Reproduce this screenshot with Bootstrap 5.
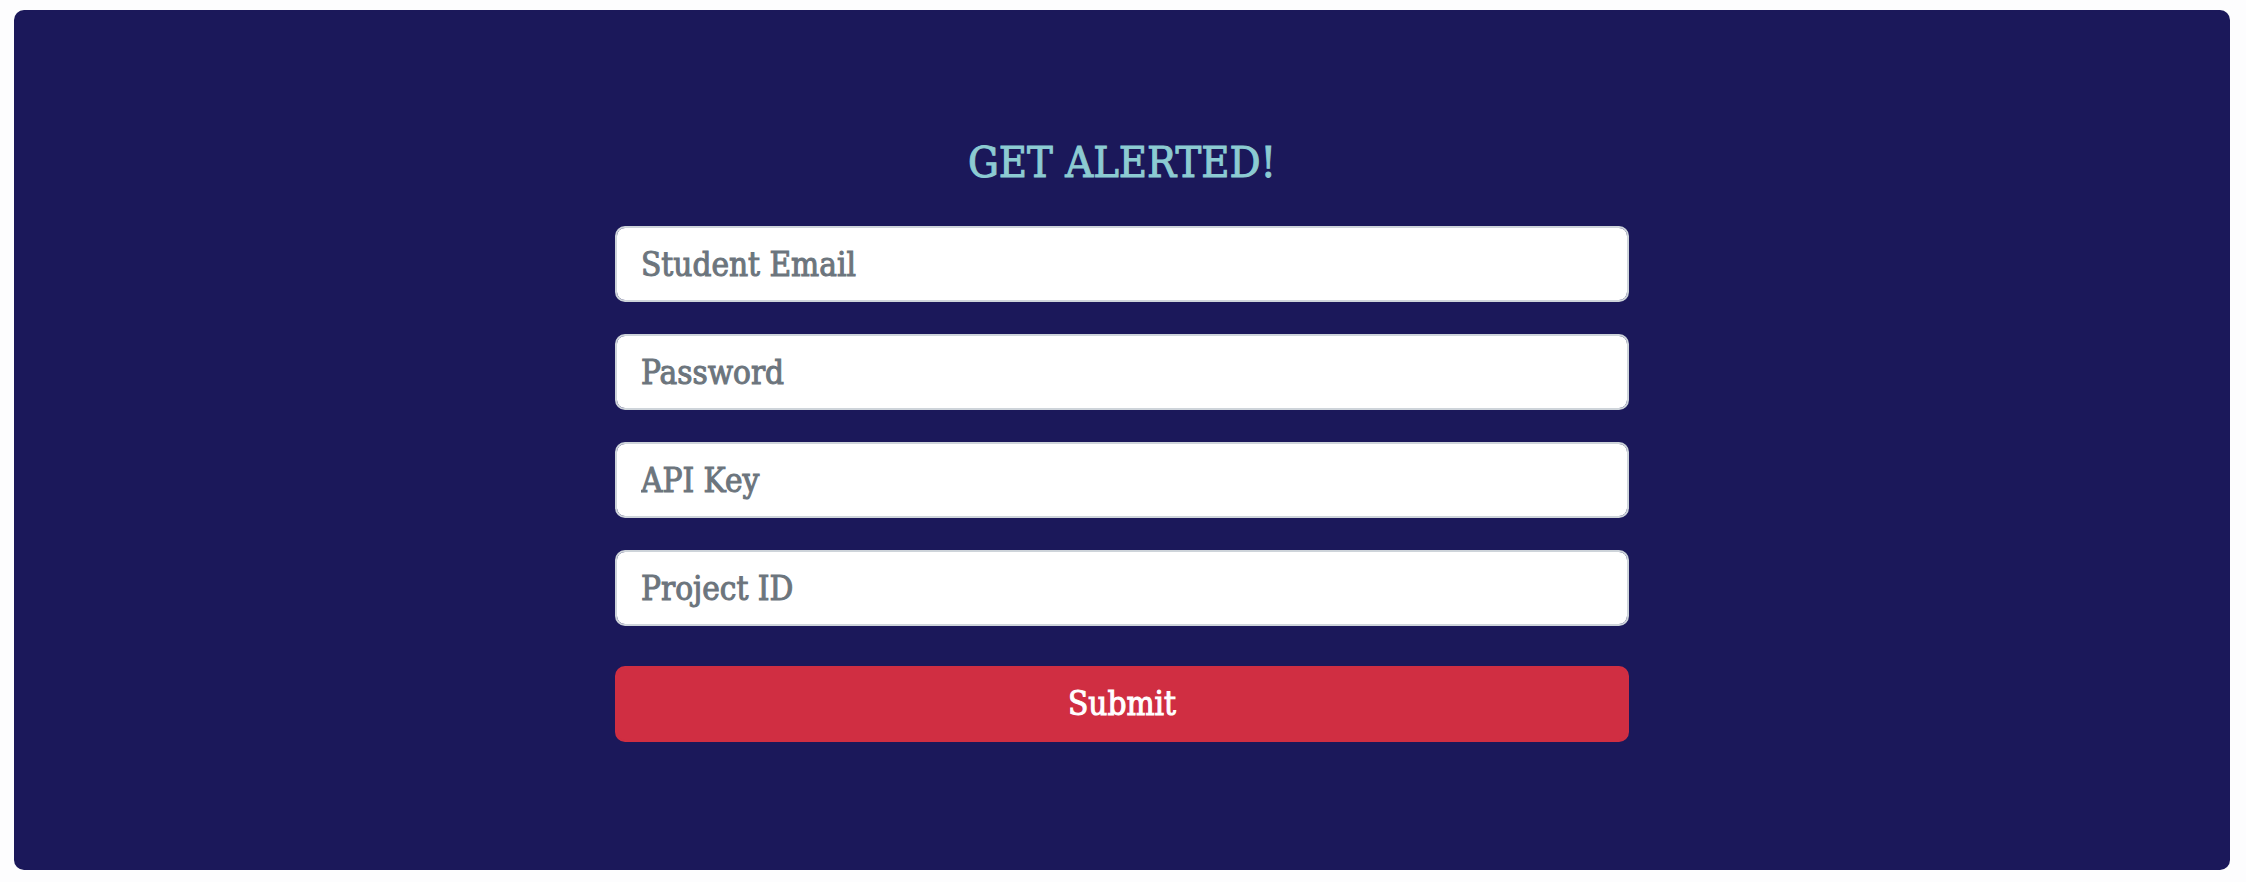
<!DOCTYPE html>
<html lang="en">
<head>
<meta charset="utf-8">
<meta name="viewport" content="width=device-width, initial-scale=1">
<title>Get Alerted!</title>
<link rel="stylesheet" href="https://cdn.jsdelivr.net/npm/bootstrap@5.3.0/dist/css/bootstrap.min.css">
<style>
body { background: #fdfdfe; font-family: "DejaVu Serif Condensed", "DejaVu Serif", serif; }
.alert-panel { background: #1b185a; margin: 10px 16px 12px 14px; padding: 128px 16px; border-radius: 10px; }
.alert-form { max-width: 1014px; }
.alert-title { color: #8ccbd2; font-size: 43px; line-height: 48px; font-weight: 400; margin-bottom: 40px; -webkit-text-stroke: 1px #8ccbd2; }
.alert-form .form-control, .btn-submit { height: 76px; font-size: 33px; line-height: 48px; border-width: 2px; border-radius: 10px; }
.alert-form .form-control { padding: 12px 24px; margin-bottom: 32px; border-color: #ced4da; }
.alert-form .form-control::placeholder { color: #6c757d; opacity: 1; -webkit-text-stroke: 1px #6c757d; }
.btn-submit, .btn-submit:hover { background: #d02e42; border-color: #d02e42; color: #fff; }
.btn-submit { margin-top: 8px; -webkit-text-stroke: 1px #fff; }
</style>
</head>
<body>
<main class="alert-panel">
  <form class="alert-form mx-auto">
    <h1 class="alert-title text-center">GET ALERTED!</h1>
    <input type="email" class="form-control" aria-label="Student Email" placeholder="Student Email">
    <input type="password" class="form-control" aria-label="Password" placeholder="Password">
    <input type="text" class="form-control" aria-label="API Key" placeholder="API Key">
    <input type="text" class="form-control" aria-label="Project ID" placeholder="Project ID">
    <button type="submit" class="btn btn-submit w-100">Submit</button>
  </form>
</main>
<script src="https://cdn.jsdelivr.net/npm/bootstrap@5.3.0/dist/js/bootstrap.bundle.min.js"></script>
</body>
</html>
